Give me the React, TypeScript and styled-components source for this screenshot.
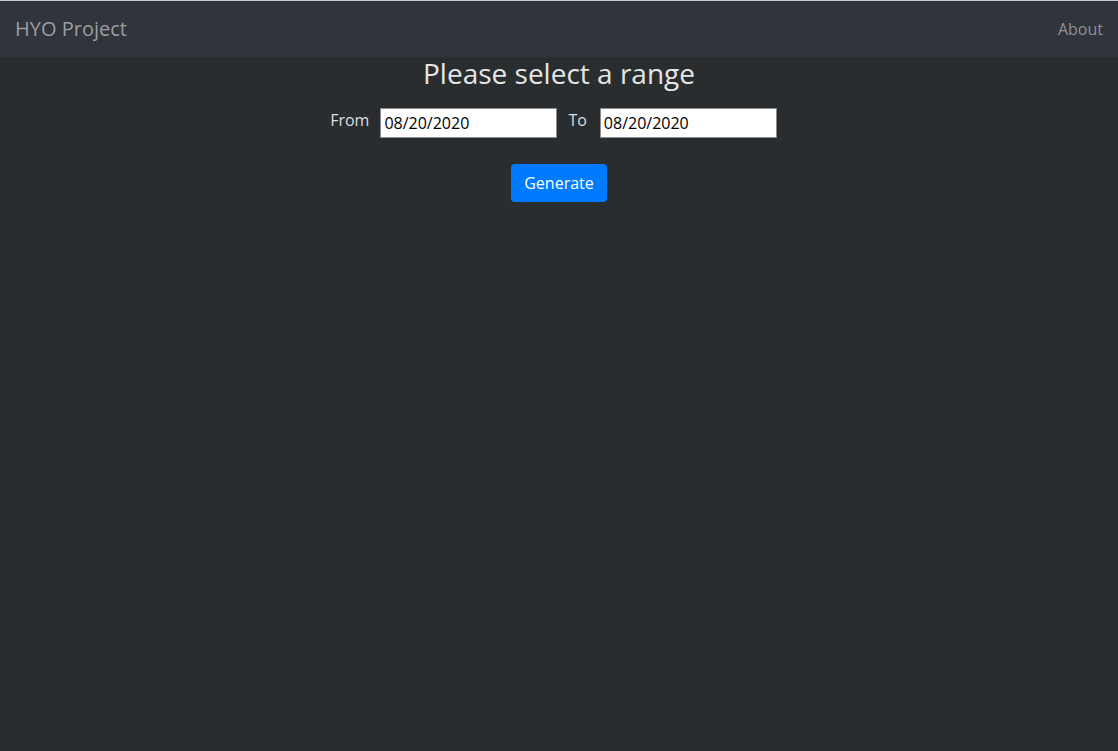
import React from "react";
import styled, { createGlobalStyle } from "styled-components";

const Global = createGlobalStyle`
  html, body { margin: 0; padding: 0; background: #2a2d30; }
  body { font-family: "Open Sans", "Noto Sans", sans-serif; color: #e6e6e6; min-height: 751px; }
  * { box-sizing: border-box; }
`;

const Page = styled.div`
  min-height: 751px;
  background: #2a2d30;
  border-top: 1px solid #c9cbcd;
`;

const NavBar = styled.nav`
  height: 56px;
  background: #30343b;
  display: flex;
  align-items: center;
  justify-content: space-between;
  padding: 0 15px;
`;

const Brand = styled.a`
  font-size: 20px;
  line-height: 30px;
  margin-top: 0;
  color: #9b9ea3;
  text-decoration: none;
`;

const NavLink = styled.a`
  font-size: 16px;
  color: #8e9196;
  text-decoration: none;
`;

const Main = styled.main`
  display: flex;
  flex-direction: column;
  align-items: center;
`;

const Title = styled.h3`
  margin: -1px 0 0;
  font-size: 28px;
  font-weight: 400;
  line-height: 34px;
  color: #e4e5e6;
`;

const Row = styled.div`
  display: flex;
  align-items: flex-start;
  margin-top: 18px;
  padding-left: 0;
`;

const Label = styled.label<{ $gap: number }>`
  font-size: 16px;
  line-height: 24px;
  color: #dcdddf;
  margin: 0 ${(p) => p.$gap}px 0 0;
`;

const DateInput = styled.input`
  width: 177px;
  height: 30px;
  margin-right: 11px;
  font-family: "Open Sans", "Noto Sans", sans-serif;
  font-size: 16px;
  color: #000;
  background: #fff;
  border: 1px solid #8a8a8a;
  padding: 0 3px;
  outline: none;
`;

const Button = styled.button`
  margin-top: 26px;
  height: 38px;
  padding: 0 13px;
  background: #007bff;
  color: #fff;
  border: none;
  border-radius: 4px;
  font-family: "Open Sans", "Noto Sans", sans-serif;
  font-size: 16px;
`;

export default function App() {
  return (
    <>
      <Global />
      <Page>
        <NavBar>
          <Brand>HYO Project</Brand>
          <NavLink>About</NavLink>
        </NavBar>
        <Main>
          <Title>Please select a range</Title>
          <Row>
            <Label $gap={11}>From</Label>
            <DateInput defaultValue="08/20/2020" />
            <Label $gap={13}>To</Label>
            <DateInput defaultValue="08/20/2020" />
          </Row>
          <Button>Generate</Button>
        </Main>
      </Page>
    </>
  );
}
